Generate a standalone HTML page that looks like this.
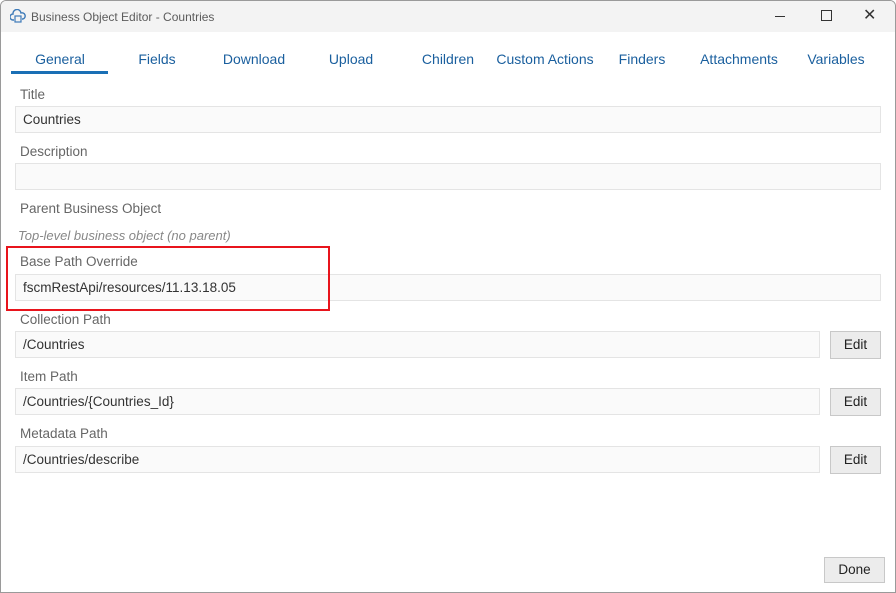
<!DOCTYPE html><html><head><style>
body{margin:0;width:896px;height:593px;background:#fff;font-family:"Liberation Sans",sans-serif;position:relative;overflow:hidden}
.win{position:absolute;left:0;top:0;width:894px;height:591px;border:1px solid #9a9a9a;border-radius:6px 6px 0 0;background:#fff;overflow:hidden}
.tb{position:absolute;left:0;top:0;width:100%;height:31px;background:#f3f3f3}
.t{position:absolute;font-size:12px;color:#5c5c5c;top:9px;left:30px}
.tab{position:absolute;top:50px;font-size:14px;color:#1a5f9e;transform:translateX(-50%)}
.lbl{position:absolute;left:19px;font-size:13.5px;color:#666}
.in{position:absolute;left:14px;width:864px;height:27px;border:1px solid #e4e4e4;background:#fafafa;box-sizing:border-box;font-size:13.5px;color:#333;line-height:26px;padding-left:7px}
.btn{position:absolute;left:829px;width:51px;height:28px;border:1px solid #c8c8c8;background:#ececec;box-sizing:border-box;font-size:13.5px;text-align:center;line-height:26px;color:#222}
</style></head><body><div class="win">
<div class="tb"><svg style="position:absolute;left:9px;top:8px" width="16" height="14" viewBox="0 0 16 14"><path d="M4 11H3a3 3 0 0 1 0-6 4 4 0 0 1 8-1 3 3 0 0 1 2 6h-1" fill="none" stroke="#3d7ab8" stroke-width="1.4"/><rect x="5" y="7" width="6" height="6" fill="none" stroke="#3d7ab8" stroke-width="1.2"/></svg>
<div class="t">Business Object Editor - Countries</div>
<div style="position:absolute;left:774px;top:15px;width:10px;border-top:1px solid #333"></div>
<div style="position:absolute;left:820px;top:9px;width:9px;height:9px;border:1px solid #333"></div>
<div style="position:absolute;left:862px;top:4px;font-size:16px;color:#333">✕</div></div>
<div class="tab" style="left:59px">General</div><div class="tab" style="left:156px">Fields</div><div class="tab" style="left:253px">Download</div><div class="tab" style="left:350px">Upload</div><div class="tab" style="left:447px">Children</div><div class="tab" style="left:544px">Custom Actions</div><div class="tab" style="left:641px">Finders</div><div class="tab" style="left:738px">Attachments</div><div class="tab" style="left:835px">Variables</div>
<div style="position:absolute;left:10px;top:70px;width:97px;height:3px;background:#1a6fb5"></div>
<div class="lbl" style="top:86px">Title</div><div class="in" style="top:105px;width:866px">Countries</div>
<div class="lbl" style="top:143px">Description</div><div class="in" style="top:162px;width:866px"></div>
<div class="lbl" style="top:200px">Parent Business Object</div>
<div class="lbl" style="top:227px;left:17px;font-style:italic;color:#888;font-size:13px">Top-level business object (no parent)</div>
<div class="lbl" style="top:253px">Base Path Override</div><div class="in" style="top:273px;width:866px">fscmRestApi/resources/11.13.18.05</div>
<div style="position:absolute;left:5px;top:245px;width:320px;height:61px;border:2px solid #e8141c"></div>
<div class="lbl" style="top:311px">Collection Path</div><div class="in" style="top:330px;width:805px">/Countries</div><div class="btn" style="top:330px">Edit</div>
<div class="lbl" style="top:368px">Item Path</div><div class="in" style="top:387px;width:805px">/Countries/{Countries_Id}</div><div class="btn" style="top:387px">Edit</div>
<div class="lbl" style="top:425px">Metadata Path</div><div class="in" style="top:445px;width:805px">/Countries/describe</div><div class="btn" style="top:445px">Edit</div>
<div class="btn" style="left:823px;top:556px;width:61px;height:26px;line-height:24px">Done</div>
</div></body></html>
